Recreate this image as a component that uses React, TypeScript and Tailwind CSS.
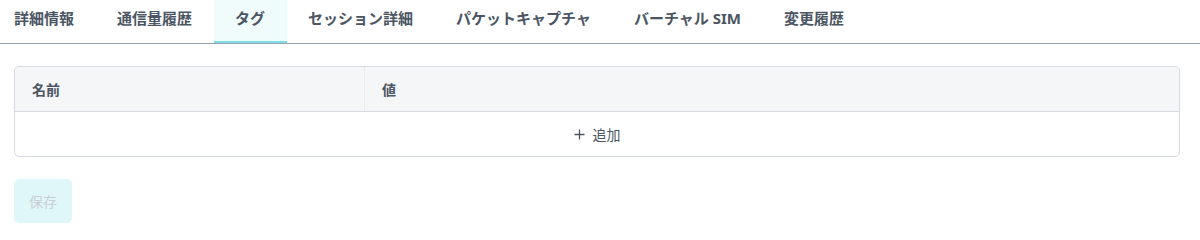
import React from "react";

const tabs = ["詳細情報", "通信量履歴", "タグ", "セッション詳細", "パケットキャプチャ", "バーチャル SIM", "変更履歴"];

export default function App() {
  return (
    <div
      className="w-[1200px] h-[240px] bg-white"
      style={{ fontFamily: '"Noto Sans", "Noto Sans CJK JP", sans-serif' }}
    >
      <div className="flex border-b border-[#9aa2ae] h-[44px]">
        {tabs.map((t, i) => {
          const active = i === 2;
          return (
            <div
              key={t}
              className={
                "h-[43px] pt-[7px] text-[15px] leading-[22px] font-bold text-[#4b5563] whitespace-nowrap border-b-2 " +
                (i === 0 ? "pl-[14px] pr-[21.5px] " : "px-[21.5px] ") +
                (active ? "bg-[#f0fbfc] border-[#7fdfe6]" : "border-transparent")
              }
            >
              {t}
            </div>
          );
        })}
      </div>

      <div className="pl-[14px] pr-[20px] pt-[22px]">
        <div className="border border-[#d6dae1] rounded-[5px] overflow-hidden">
          <div className="flex h-[45px] bg-[#f5f6f8] border-b border-[#d6dae1] text-[14px] font-bold text-[#4b5563]">
            <div className="w-[350px] flex items-center pl-[17px] border-r border-dotted border-[#e2e5ea]">名前</div>
            <div className="flex-1 flex items-center pl-[17px]">値</div>
          </div>
          <div className="h-[44px] flex items-center justify-center text-[14px] text-[#4b5563]">
            <svg width="11" height="11" viewBox="0 0 11 11" className="mr-[8px]">
              <path d="M5.5 0.5V10.5M0.5 5.5H10.5" stroke="#4b5563" strokeWidth="1.3" fill="none" />
            </svg>
            <span>追加</span>
          </div>
        </div>

        <button className="mt-[22px] w-[58px] h-[44px] rounded-[5px] bg-[#e0f7f9] text-[14px] text-[#c9ced4] flex items-center justify-center">
          保存
        </button>
      </div>
    </div>
  );
}
